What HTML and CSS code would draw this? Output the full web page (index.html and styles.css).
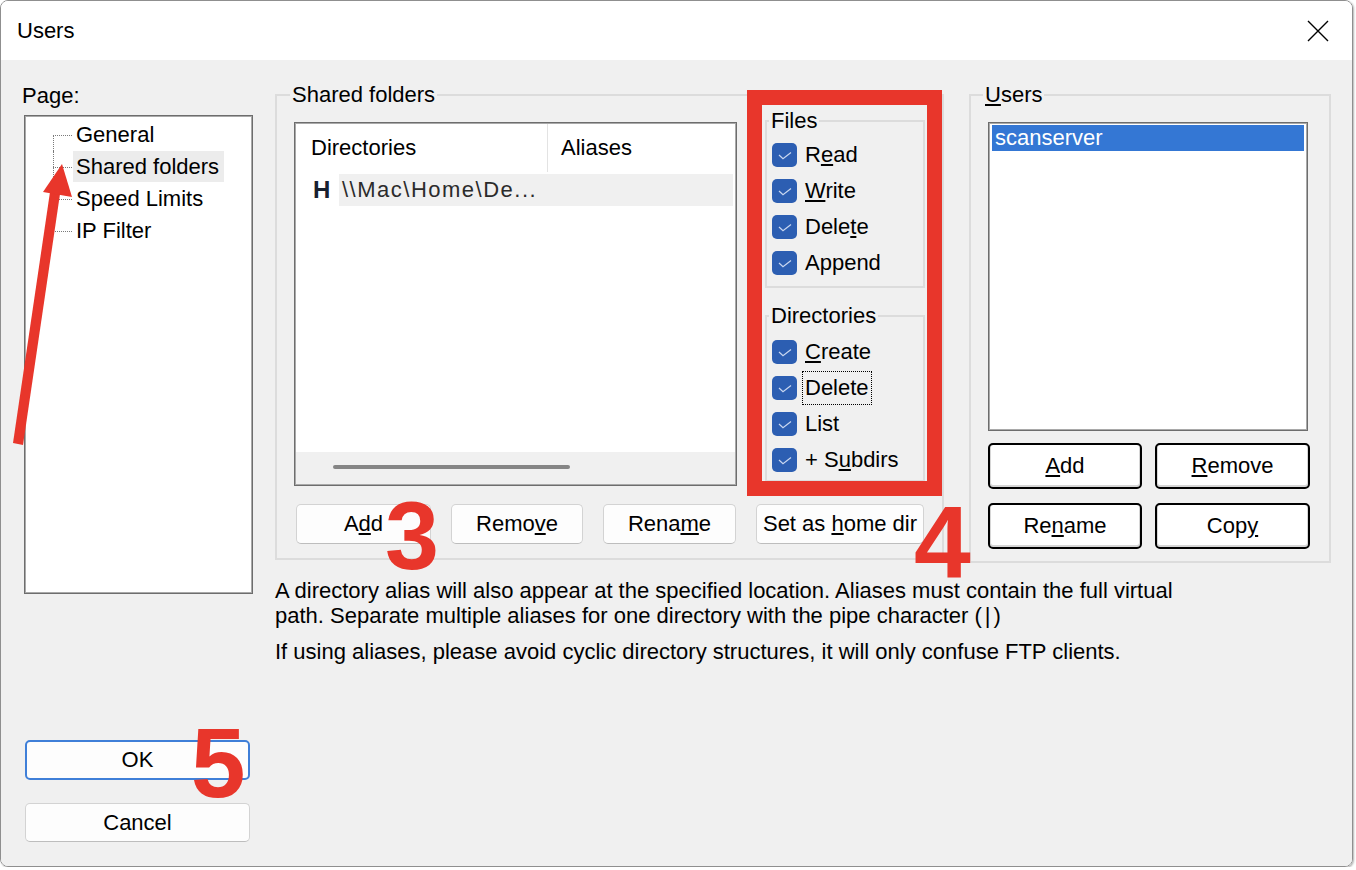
FILE: index.html
```html
<!DOCTYPE html>
<html lang="en">
<head>
  <meta charset="UTF-8">
  <meta name="viewport" content="width=device-width, initial-scale=1.0">
  <title>Users</title>
  <link rel="stylesheet" href="styles.css">
</head>
<body>
  <div class="window">
    <div class="titlebar">
      <span class="title">Users</span>
      <svg class="close" width="22" height="22" viewBox="0 0 22 22">
        <path d="M1 1 L21 21 M21 1 L1 21" stroke="#000" stroke-width="1.4" fill="none"/>
      </svg>
    </div>

    <div class="dialog">
      <div class="side">
        <div class="page-label">Page:</div>
        <ul class="tree listbox">
          <li class="tree-row first">
            <span class="twig"><span class="twig-up"></span><span class="twig-down"></span></span>
            <span class="tree-label">General</span>
          </li>
          <li class="tree-row">
            <span class="twig"><span class="twig-up"></span><span class="twig-down"></span></span>
            <span class="tree-label selected">Shared folders</span>
          </li>
          <li class="tree-row">
            <span class="twig"><span class="twig-up"></span><span class="twig-down"></span></span>
            <span class="tree-label">Speed Limits</span>
          </li>
          <li class="tree-row last">
            <span class="twig"><span class="twig-up"></span><span class="twig-down"></span></span>
            <span class="tree-label">IP Filter</span>
          </li>
        </ul>
        <button class="btn btn-default ok">OK</button>
        <button class="btn cancel">Cancel</button>
      </div>

      <div class="main">
        <div class="groups">
          <fieldset class="group shared">
            <legend>Shared folders</legend>
            <div class="shared-body">
              <div class="listview listbox">
                <div class="lv-header">
                  <div class="lv-col lv-col-dir">Directories</div>
                  <div class="lv-col">Aliases</div>
                </div>
                <div class="lv-row">
                  <span class="lv-icon">H</span>
                  <span class="lv-cell">\\Mac\Home\De...</span>
                </div>
                <div class="lv-scroll"><div class="lv-thumb"></div></div>
              </div>

              <div class="perms">
                <fieldset class="group perm-group files">
                  <legend>Files</legend>
                  <div class="check-row"><span class="check"></span><span>R<u>e</u>ad</span></div>
                  <div class="check-row"><span class="check"></span><span><u>W</u>rite</span></div>
                  <div class="check-row"><span class="check"></span><span>Dele<u>t</u>e</span></div>
                  <div class="check-row"><span class="check"></span><span>Append</span></div>
                </fieldset>
                <fieldset class="group perm-group dirs">
                  <legend>Directories</legend>
                  <div class="check-row"><span class="check"></span><span><u>C</u>reate</span></div>
                  <div class="check-row"><span class="check"></span><span class="focused">Delete</span></div>
                  <div class="check-row"><span class="check"></span><span>List</span></div>
                  <div class="check-row"><span class="check"></span><span>+ S<u>u</u>bdirs</span></div>
                </fieldset>
              </div>
            </div>
            <div class="dir-buttons">
              <button class="btn w-add">A<u>d</u>d</button>
              <button class="btn w-remove">Remo<u>v</u>e</button>
              <button class="btn w-rename">Rena<u>m</u>e</button>
              <button class="btn w-home">Set as <u>h</u>ome dir</button>
            </div>
          </fieldset>

          <fieldset class="group users">
            <legend><u>U</u>sers</legend>
            <div class="user-list listbox">
              <div class="user-item">scanserver</div>
            </div>
            <div class="user-buttons">
              <button class="btn btn-dark"><u>A</u>dd</button>
              <button class="btn btn-dark"><u>R</u>emove</button>
              <button class="btn btn-dark">Re<u>n</u>ame</button>
              <button class="btn btn-dark">Cop<u>y</u></button>
            </div>
          </fieldset>
        </div>

        <div class="notes">
          <p>A directory alias will also appear at the specified location. Aliases must contain the full virtual<br>path. Separate multiple aliases for one directory with the pipe character <span class="pipe">(|)</span></p>
          <p>If using aliases, please avoid cyclic directory structures, it will only confuse FTP clients.</p>
        </div>
      </div>
    </div>
  </div>

  <!-- annotations drawn over the screenshot -->
  <div class="mark-box"></div>
  <div class="mark-num num-3">3</div>
  <div class="mark-num num-4">4</div>
  <div class="mark-num num-5">5</div>
  <svg class="mark-arrow" width="100" height="470" viewBox="0 0 100 470">
    <polygon points="13,443 23,445 60,194 50,192" fill="#e8362b"/>
    <polygon points="62,164 43,192 72,197" fill="#e8362b"/>
  </svg>
</body>
</html>
```

FILE: styles.css
```css
body {
  margin: 0;
  background: #fff;
  font-family: "Liberation Sans", Arial, sans-serif;
  font-size: 22px;
  color: #000;
  position: relative;
}
.window {
  width: 1353px;
  height: 867px;
  box-sizing: border-box;
  border: 1px solid #8f8f8f;
  border-radius: 8px;
  box-shadow: 1px 1px 2px rgba(0, 0, 0, 0.3);
  overflow: hidden;
  display: flex;
  flex-direction: column;
}
.titlebar {
  height: 59px;
  flex: none;
  background: #fff;
  display: flex;
  align-items: center;
  justify-content: space-between;
  padding: 0 23px 0 16px;
}
.title {
  font-size: 22px;
}
.close {
  display: block;
}
.dialog {
  flex: 1;
  background: #f0f0f0;
  display: flex;
  padding-left: 23px;
}

/* left column */
.side {
  width: 229px;
  display: flex;
  flex-direction: column;
  padding-top: 25px;
}
.page-label {
  line-height: 22px;
  margin-left: -2px;
}
.listbox {
  box-sizing: border-box;
  border: 1px solid #6d6d6d;
  padding: 1px;
  box-shadow: inset 0 0 0 1px #a9a9a9;
  background: #fff;
}
.tree {
  list-style: none;
  margin: 8px 0 0;
  height: 479px;
  padding-top: 3px;
}
.tree-row {
  display: flex;
  height: 32px;
}
.twig {
  width: 19px;
  margin-left: 27px;
  display: flex;
  flex-direction: column;
}
.twig-up,
.twig-down {
  height: 16px;
  box-sizing: border-box;
  border-left: 1px dotted #7a7a7a;
}
.twig-down {
  border-top: 1px dotted #7a7a7a;
}
.first .twig-up {
  border-left: none;
}
.last .twig-down {
  border-left: none;
}
.tree-label {
  margin-left: 1px;
  padding: 0 5px 0 3px;
  height: 31px;
  line-height: 31px;
}
.tree-label.selected {
  background: #ececec;
}
.btn {
  font: inherit;
  color: #000;
  background: #fdfdfd;
  border: 1px solid #d3d3d3;
  border-bottom-color: #bdbdbd;
  border-radius: 5px;
  padding: 0;
}
.ok {
  margin: 146px 0 0 1px;
  width: 225px;
  height: 40px;
  border: 2px solid #3f7fd8;
}
.cancel {
  margin: 23px 0 0 1px;
  width: 225px;
  height: 39px;
}

/* main area */
.main {
  margin-left: 22px;
  padding-top: 24px;
}
.groups {
  display: flex;
  align-items: flex-start;
  gap: 25px;
}
.group {
  margin: 0;
  min-width: 0;
  box-sizing: border-box;
  border: 2px solid #dcdcdc;
}
.group legend {
  line-height: 22px;
  padding: 0 2px;
}
.shared {
  width: 669px;
  padding: 4px 17px 14px;
}
.shared legend {
  margin-left: -4px;
}
.shared-body {
  display: flex;
  align-items: flex-start;
  gap: 28px;
}
.listview {
  width: 443px;
  height: 364px;
  margin-top: 12px;
  display: flex;
  flex-direction: column;
}
.lv-header {
  height: 48px;
  display: flex;
}
.lv-col {
  line-height: 48px;
  padding-left: 13px;
}
.lv-col-dir {
  width: 252px;
  box-sizing: border-box;
  padding-left: 15px;
  border-right: 1px solid #e3e3e3;
}
.lv-row {
  margin-top: 2px;
  height: 32px;
  display: flex;
  align-items: center;
}
.lv-icon {
  width: 43px;
  box-sizing: border-box;
  padding-left: 17px;
  font-size: 24px;
  font-weight: bold;
  color: #18202e;
}
.lv-cell {
  flex: 1;
  height: 32px;
  line-height: 32px;
  margin-right: 2px;
  padding-left: 3px;
  background: #f0f0f0;
  color: #2b2b2b;
  letter-spacing: 1.5px;
}
.lv-scroll {
  margin-top: auto;
  height: 32px;
  background: #f0f0f0;
  padding: 13px 0 0 37px;
  box-sizing: border-box;
}
.lv-thumb {
  width: 237px;
  height: 4px;
  border-radius: 2px;
  background: #858585;
}
.perms {
  width: 160px;
  display: flex;
  flex-direction: column;
}
.perm-group {
  padding: 5px 5px 5px;
}
.perm-group legend {
  margin-left: -3px;
}
.dirs {
  margin-top: 17px;
  padding-top: 7px;
  padding-bottom: 2px;
}
.check-row {
  height: 36px;
  display: flex;
  align-items: center;
  gap: 8px;
}
.check {
  width: 25px;
  height: 24px;
  flex: none;
  border-radius: 5px;
  background: #2c5eb2 url("data:image/svg+xml,%3Csvg xmlns='http://www.w3.org/2000/svg' width='25' height='24'%3E%3Cpath d='M7 12 L11 15.8 L19 9.5' stroke='%23c9d7f0' stroke-width='1.2' fill='none'/%3E%3C/svg%3E") no-repeat center;
}
.focused {
  border: 1px dotted #000;
  padding: 3px 2px;
  margin-left: -3px;
}
.dir-buttons {
  margin-top: 18px;
  display: flex;
  gap: 20px;
  padding-left: 2px;
}
.dir-buttons .btn {
  height: 40px;
}
.w-add { width: 135px; }
.w-remove { width: 132px; }
.w-rename { width: 133px; }
.w-home { width: 168px; }

.users {
  width: 362px;
  padding: 16px 17px 12px;
}
.users legend {
  margin-left: -5px;
}
.user-list {
  width: 320px;
  height: 309px;
}
.user-item {
  margin: 1px 2px 0;
  height: 26px;
  line-height: 26px;
  padding-left: 3px;
  background: #3477d4;
  color: #fff;
}
.user-buttons {
  margin-top: 12px;
  display: grid;
  grid-template-columns: 154px 155px;
  gap: 14px 13px;
}
.btn-dark {
  height: 46px;
  background: #fff;
  border: 2px solid #000;
  border-radius: 5px;
  box-shadow: inset 0 -1px 0 1px #d6d6d6;
}
.notes {
  margin-top: 15px;
  font-size: 22px;
  line-height: 25px;
}
.notes p {
  margin: 0;
}
.notes p + p {
  margin-top: 11px;
}
.pipe {
  letter-spacing: 3px;
}

/* red annotations */
.mark-box {
  position: absolute;
  left: 747px;
  top: 90px;
  width: 195px;
  height: 406px;
  box-sizing: border-box;
  border: 15px solid #e8362b;
}
.mark-num {
  position: absolute;
  font-weight: bold;
  color: #e8362b;
  line-height: 0.7;
}
.num-3 { left: 385px; top: 502px; font-size: 97px; }
.num-4 { left: 914px; top: 507px; font-size: 102px; }
.num-5 { left: 191px; top: 729px; font-size: 98px; }
.mark-arrow {
  position: absolute;
  left: 0;
  top: 0;
}
```
